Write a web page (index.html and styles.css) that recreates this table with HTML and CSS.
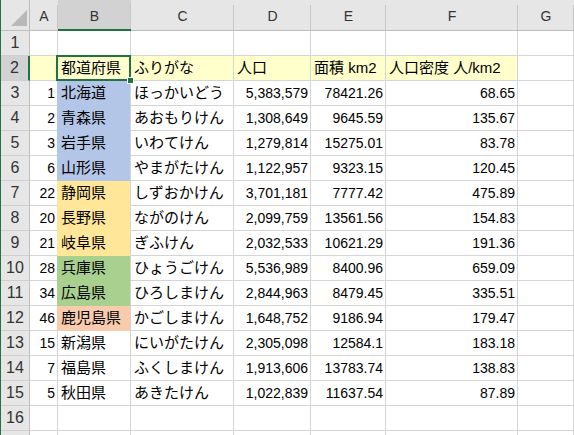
FILE: index.html
```html
<!DOCTYPE html>
<html lang="ja">
<head>
<meta charset="utf-8">
<title>Sheet</title>
<link rel="stylesheet" href="styles.css">
</head>
<body>
<div class="sheet">
  <div class="corner"><svg width="28" height="30" viewBox="0 0 28 30"><polygon points="26,10 26,26 10,26" fill="#b8b8b8"/></svg></div>
  <div class="ch">A</div>
  <div class="ch on">B</div>
  <div class="ch">C</div>
  <div class="ch">D</div>
  <div class="ch">E</div>
  <div class="ch">F</div>
  <div class="ch">G</div>

  <div class="rh">1</div>
  <div class="c"></div><div class="c"></div><div class="c"></div><div class="c"></div><div class="c"></div><div class="c"></div><div class="c"></div>

  <div class="rh on">2</div>
  <div class="c hy"></div>
  <div class="c j hy cur">都道府県<span class="selbox"></span><span class="handle"></span></div>
  <div class="c j hy">ふりがな</div>
  <div class="c j hy">人口</div>
  <div class="c j hy">面積 km2</div>
  <div class="c j hy">人口密度 人/km2</div>
  <div class="c"></div>

  <div class="rh">3</div>
  <div class="c r">1</div><div class="c j f fb">北海道</div><div class="c j">ほっかいどう</div><div class="c r">5,383,579</div><div class="c r">78421.26</div><div class="c r">68.65</div><div class="c"></div>

  <div class="rh">4</div>
  <div class="c r">2</div><div class="c j f fb">青森県</div><div class="c j">あおもりけん</div><div class="c r">1,308,649</div><div class="c r">9645.59</div><div class="c r">135.67</div><div class="c"></div>

  <div class="rh">5</div>
  <div class="c r">3</div><div class="c j f fb">岩手県</div><div class="c j">いわてけん</div><div class="c r">1,279,814</div><div class="c r">15275.01</div><div class="c r">83.78</div><div class="c"></div>

  <div class="rh">6</div>
  <div class="c r">6</div><div class="c j f fb">山形県</div><div class="c j">やまがたけん</div><div class="c r">1,122,957</div><div class="c r">9323.15</div><div class="c r">120.45</div><div class="c"></div>

  <div class="rh">7</div>
  <div class="c r">22</div><div class="c j f fy">静岡県</div><div class="c j">しずおかけん</div><div class="c r">3,701,181</div><div class="c r">7777.42</div><div class="c r">475.89</div><div class="c"></div>

  <div class="rh">8</div>
  <div class="c r">20</div><div class="c j f fy">長野県</div><div class="c j">ながのけん</div><div class="c r">2,099,759</div><div class="c r">13561.56</div><div class="c r">154.83</div><div class="c"></div>

  <div class="rh">9</div>
  <div class="c r">21</div><div class="c j f fy">岐阜県</div><div class="c j">ぎふけん</div><div class="c r">2,032,533</div><div class="c r">10621.29</div><div class="c r">191.36</div><div class="c"></div>

  <div class="rh">10</div>
  <div class="c r">28</div><div class="c j f fg">兵庫県</div><div class="c j">ひょうごけん</div><div class="c r">5,536,989</div><div class="c r">8400.96</div><div class="c r">659.09</div><div class="c"></div>

  <div class="rh">11</div>
  <div class="c r">34</div><div class="c j f fg">広島県</div><div class="c j">ひろしまけん</div><div class="c r">2,844,963</div><div class="c r">8479.45</div><div class="c r">335.51</div><div class="c"></div>

  <div class="rh">12</div>
  <div class="c r">46</div><div class="c j f fo">鹿児島県</div><div class="c j">かごしまけん</div><div class="c r">1,648,752</div><div class="c r">9186.94</div><div class="c r">179.47</div><div class="c"></div>

  <div class="rh">13</div>
  <div class="c r">15</div><div class="c j">新潟県</div><div class="c j">にいがたけん</div><div class="c r">2,305,098</div><div class="c r">12584.1</div><div class="c r">183.18</div><div class="c"></div>

  <div class="rh">14</div>
  <div class="c r">7</div><div class="c j">福島県</div><div class="c j">ふくしまけん</div><div class="c r">1,913,606</div><div class="c r">13783.74</div><div class="c r">138.83</div><div class="c"></div>

  <div class="rh">15</div>
  <div class="c r">5</div><div class="c j">秋田県</div><div class="c j">あきたけん</div><div class="c r">1,022,839</div><div class="c r">11637.54</div><div class="c r">87.89</div><div class="c"></div>

  <div class="rh">16</div>
  <div class="c"></div><div class="c"></div><div class="c"></div><div class="c"></div><div class="c"></div><div class="c"></div><div class="c"></div>

  <div class="rh"></div>
  <div class="c"></div><div class="c"></div><div class="c"></div><div class="c"></div><div class="c"></div><div class="c"></div><div class="c"></div>
</div>
</body>
</html>
```
FILE: styles.css
```css
html, body {
  margin: 0;
  padding: 0;
  background: #ffffff;
  overflow: hidden;
}

body {
  font-family: "Liberation Sans", "Noto Sans CJK JP", sans-serif;
  font-size: 14px;
  color: #000000;
}

.sheet {
  display: grid;
  grid-template-columns: 29px 28px 73px 103px 77px 75px 132px 1fr;
  grid-template-rows: 31px repeat(17, 25px);
  width: 573px;
  height: 435px;
  border-left: 1px solid #217346;
  overflow: hidden;
}

.sheet > div {
  box-sizing: border-box;
  min-width: 0;
}

.corner {
  background: #e6e6e6;
  border-right: 1px solid #bdbdbd;
  border-bottom: 1px solid #bdbdbd;
  display: flex;
}

.ch {
  background: linear-gradient(#c6c6c6, #c6c6c6) right 5px / 1px calc(100% - 5px) no-repeat, #e6e6e6;
  border-bottom: 1px solid #bdbdbd;
  text-align: center;
  color: #333333;
  font-size: 14px;
  padding-top: 2px;
  line-height: 28px;
}

.ch.on {
  background-color: #d2d2d2;
  border-bottom: 2px solid #217346;
}

.rh {
  background: #e6e6e6;
  border-right: 1px solid #bdbdbd;
  border-bottom: 1px solid #cfcfcf;
  text-align: center;
  color: #333333;
  font-size: 16px;
  line-height: 24px;
}

.rh.on {
  background: #d2d2d2;
  border-right: 2px solid #217346;
}

.c {
  border-right: 1px solid #d4d4d4;
  border-bottom: 1px solid #d4d4d4;
  padding: 0 3px;
  line-height: 24px;
  white-space: nowrap;
  overflow: hidden;
}

.r {
  text-align: right;
  padding-right: 2px;
}

.j {
  font-size: 15px;
}

.hy {
  background: #ffffcc;
}

.f {
  margin-left: -1px;
  padding-left: 4px;
}

.fb {
  background: #b4c6e7;
  border-bottom-color: #b4c6e7;
}

.fy {
  background: #ffe699;
  border-bottom-color: #ffe699;
}

.fg {
  background: #a9d08e;
  border-bottom-color: #a9d08e;
}

.fo {
  background: #f8cbad;
  border-bottom-color: #f8cbad;
}

.sheet > .cur {
  position: relative;
  overflow: visible;
  z-index: 2;
}

.selbox {
  position: absolute;
  left: -2px;
  top: -1px;
  right: -1px;
  bottom: -1px;
  border: 2px solid #217346;
  pointer-events: none;
}

.handle {
  position: absolute;
  right: -4px;
  bottom: -4px;
  width: 5px;
  height: 5px;
  background: #217346;
  border: 1px solid #ffffff;
}
```
